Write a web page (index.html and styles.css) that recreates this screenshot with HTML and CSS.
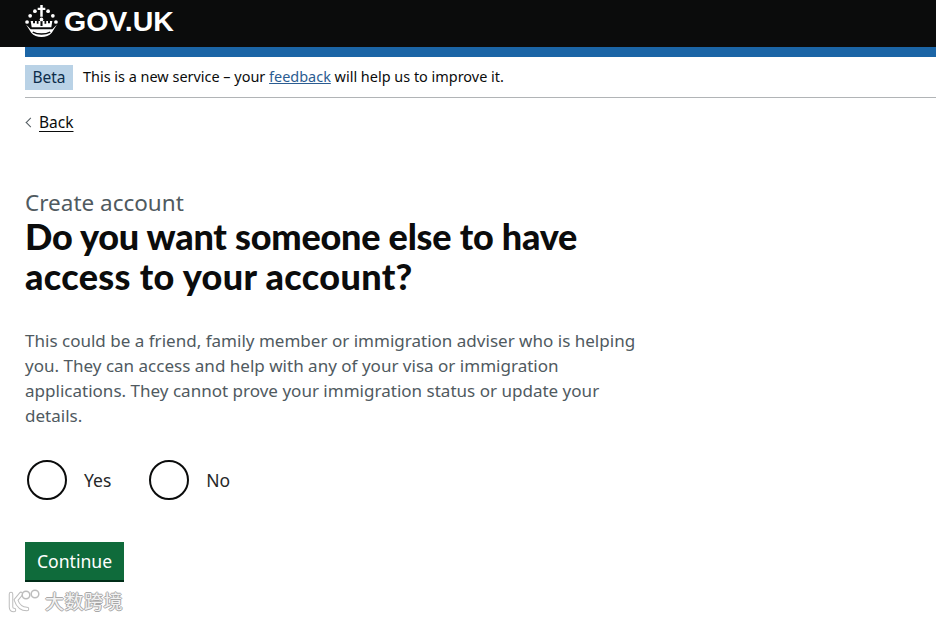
FILE: index.html
```
<!DOCTYPE html>
<html lang="en">
<head>
<meta charset="utf-8">
<title>Create account</title>
<link rel="stylesheet" href="styles.css">
</head>
<body>
<header class="header">
  <a class="logo" href="#">
    <svg class="crown" width="33" height="33" viewBox="0 0 32 32" aria-hidden="true">
      <g fill="#fff">
        <path d="M14.800 0h2.400v2.600h2.500v2.300h-2.500v6.600h-2.400V4.900h-2.500V2.600h2.500z"/>
        <circle cx="9.600" cy="6" r="1.800"/><circle cx="22.400" cy="6" r="1.800"/>
        <circle cx="5" cy="10.500" r="1.800"/><circle cx="27" cy="10.500" r="1.800"/>
        <circle cx="2" cy="16.500" r="1.800"/><circle cx="30" cy="16.500" r="1.800"/>
        <circle cx="16" cy="14" r="1.800"/>
        <path d="M5.500 15.500h2.300v2.300h1.900v-2.300h1.700v2.700h1.700v-2.700H15v4.800h2v-4.800h1.900v2.700h1.700v-2.700h1.700v2.300h1.900v-2.300h2.300l-1 6H6.500z"/>
        <path d="M1 19l5 8c2.500 3 6 4 10 4s7.500-1 10-4l5-8-4.500 4.500H5.500z"/>
      </g>
      <path d="M7.500 26.300c2.300 1.200 5.200 1.900 8.500 1.900s6.200-.7 8.500-1.900" fill="none" stroke="#0b0c0c" stroke-width="1.400"/>
    </svg>
    <span class="logo-text">GOV.UK</span>
  </a>
</header>
<div class="container">
  <div class="blue-bar"></div>
  <div class="phase">
    <strong class="tag">Beta</strong>
    <span class="phase-text">This is a new service – your <a class="link-blue" href="#">feedback</a> will help us to improve it.</span>
  </div>
  <a class="back" href="#"><span class="chevron"></span><span class="back-text">Back</span></a>
  <main class="main">
    <span class="caption">Create account</span>
    <h1 class="title">Do you want someone else to have<br><span class="title-second">access to your account?</span></h1>
    <p class="hint">This could be a friend, family member or immigration adviser who is helping you. They can access and help with any of your visa or immigration applications. They cannot prove your immigration status or update your details.</p>
    <div class="radios">
      <label class="radio"><span class="circle"></span><span class="radio-label">Yes</span></label>
      <label class="radio"><span class="circle"></span><span class="radio-label">No</span></label>
    </div>
    <button class="button" type="button">Continue</button>
  </main>
</div>
<div class="watermark">
  <svg width="36" height="26" viewBox="0 0 36 26" aria-hidden="true">
    <g fill="none" stroke="#bdbdbd" stroke-width="4.500" stroke-linecap="round">
      <path d="M4 6v13c0 2 1 3 3 3"/>
      <path d="M14 6l-5 6c2 6 6 9 11 9"/>
    </g>
    <g fill="none" stroke="#fff" stroke-width="2.500" stroke-linecap="round">
      <path d="M4 6v13c0 2 1 3 3 3"/>
      <path d="M14 6l-5 6c2 6 6 9 11 9"/>
    </g>
    <g fill="#fff" stroke="#bdbdbd" stroke-width="1.500">
      <circle cx="19" cy="7" r="3.800"/>
      <circle cx="28" cy="6" r="3.800"/>
    </g>
  </svg>
  <span class="watermark-text">大数跨境</span>
</div>
</body>
</html>
```
FILE: styles.css
```
* { box-sizing: border-box; }
html, body { margin: 0; padding: 0; background: #fff; }
body { font-family: "Noto Sans", "Liberation Sans", sans-serif; color: #0b0c0c; height: 619px; overflow: hidden; position: relative; }
.header { background: #0b0c0c; height: 47px; padding-left: 25px; display: flex; align-items: center; }
.logo { display: flex; align-items: center; gap: 6px; color: #fff; text-decoration: none; margin-top: -5px; }
.crown { display: block; }
.logo-text { font-family: "Liberation Sans", sans-serif; font-weight: 700; font-size: 28.500px; line-height: 32px; }
.container { padding-left: 25px; }
.blue-bar { height: 10px; background: #1b65a6; }
.phase { height: 41px; border-bottom: 1px solid #b1b4b6; display: flex; align-items: center; gap: 10px; font-size: 14.450px; padding-bottom: 2px; }
.tag { background: #b9d2e6; color: #0c2d4a; font-weight: 400; font-size: 15.500px; line-height: 25px; height: 25px; width: 48px; text-align: center; margin-top: 2px; }
.link-blue { color: #2b5c91; }
.back { display: inline-flex; align-items: center; margin-top: 15px; font-size: 15.500px; line-height: 18px; color: #0b0c0c; text-decoration: none; }
.back-text { text-decoration: underline; text-underline-offset: 3px; margin-left: 5px; }
.chevron { width: 7px; height: 7px; border-left: 1px solid #505a5f; border-bottom: 1px solid #505a5f; transform: rotate(45deg); margin-left: 2px; }
.main { width: 620px; padding-top: 59px; }
.caption { display: block; font-size: 22.500px; line-height: 25px; color: #505a5f; }
.title { margin: 1px 0 0; font-family: "Lato", "Noto Sans", sans-serif; font-size: 36px; line-height: 40px; font-weight: 900; letter-spacing: -0.230px; }
.title-second { letter-spacing: 0.350px; }
.hint { margin: 32px 0 0; font-size: 17.050px; line-height: 25px; color: #505a5f; }
.radios { display: flex; gap: 38px; margin-top: 32px; padding-left: 2px; }
.radio { display: flex; align-items: center; gap: 17px; height: 40px; }
.circle { width: 40px; height: 40px; border: 2px solid #0b0c0c; border-radius: 50%; }
.radio-label { font-size: 17.500px; color: #262828; }
.button { display: block; margin-top: 42px; width: 99px; height: 40px; background: #0f6b3b; color: #fff; border: 0; border-bottom: 2px solid #002d18; font-family: inherit; font-size: 17.600px; padding: 0; }
.watermark { position: absolute; left: 7px; top: 588px; display: flex; align-items: center; gap: 2px; }
.watermark-text { font-family: "Noto Sans CJK SC", sans-serif; font-size: 19px; line-height: 22px; color: #f2f2f2; text-shadow: 1px 0 0 #a8a8a8, -1px 0 0 #a8a8a8, 0 1px 0 #a8a8a8, 0 -1px 0 #a8a8a8; letter-spacing: 0.500px; }
```
